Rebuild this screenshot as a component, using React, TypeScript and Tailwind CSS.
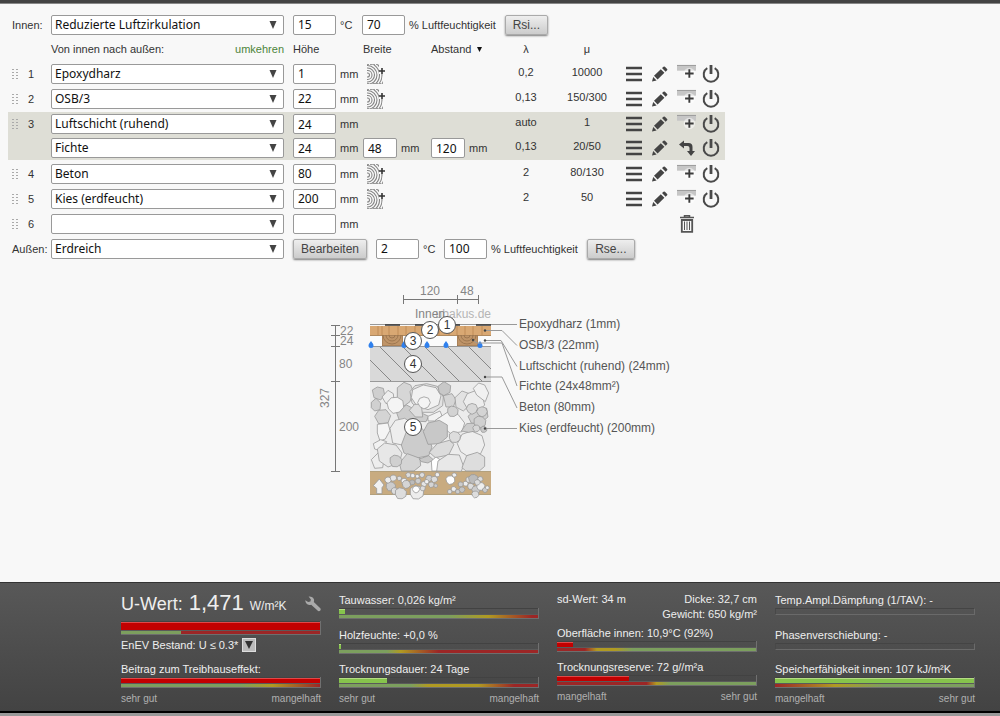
import { useState } from "react";
import type { ReactNode } from "react";

type Layer = {
    id: string;
    nr?: string;
    material: string;
    height: string;
    width?: string;
    spacing?: string;
    lambda?: string;
    mu?: string;
    canSplit?: boolean;
    action?: "add" | "swap" | "trash";
};

const upperLayers: Layer[] = [
    { id: "l1", nr: "1", material: "Epoxydharz", height: "1", lambda: "0,2", mu: "10000", canSplit: true, action: "add" },
    { id: "l2", nr: "2", material: "OSB/3", height: "22", lambda: "0,13", mu: "150/300", canSplit: true, action: "add" },
];

const airLayers: Layer[] = [
    { id: "l3", nr: "3", material: "Luftschicht (ruhend)", height: "24", lambda: "auto", mu: "1", action: "add" },
    { id: "l3b", material: "Fichte", height: "24", width: "48", spacing: "120", lambda: "0,13", mu: "20/50", action: "swap" },
];

const lowerLayers: Layer[] = [
    { id: "l4", nr: "4", material: "Beton", height: "80", lambda: "2", mu: "80/130", canSplit: true, action: "add" },
    { id: "l5", nr: "5", material: "Kies (erdfeucht)", height: "200", lambda: "2", mu: "50", canSplit: true, action: "add" },
    { id: "l6", nr: "6", material: "", height: "", action: "trash" },
];

const fieldFont = "font-['Noto_Sans',sans-serif] text-[12px] text-[#111]";

const Select = ({ label, value }: { label: string; value: string }) => (
    <div className="relative h-5 w-[233px]">
        <select
            aria-label={label}
            defaultValue={value}
            className={`block h-5 w-full appearance-none rounded-[2px] border border-[#999] bg-white pl-[3px] leading-[18px] ${fieldFont}`}
        >
            <option value={value}>{value}</option>
        </select>
        <svg className="pointer-events-none absolute top-[6px] right-[7px] h-2 w-2" viewBox="0 0 8 8" fill="#444">
            <path d="M.5 0h7L4 8z" />
        </svg>
    </div>
);

const Field = ({ label, value, className = "w-[43px]" }: { label: string; value: string; className?: string }) => (
    <input
        aria-label={label}
        defaultValue={value}
        className={`h-5 rounded-[2px] border border-[#999] bg-white px-1 leading-[18px] ${fieldFont} ${className}`}
    />
);

const GreyButton = ({ children, className = "" }: { children: ReactNode; className?: string }) => (
    <button className={`h-5 rounded-[2px] border border-[#aaa] bg-linear-to-b from-[#eee] to-[#ccc] text-[12px] leading-[18px] text-[#444] shadow-[0_1px_2px_rgba(0,0,0,0.5)] ${className}`}>
        {children}
    </button>
);

const GripIcon = () => (
    <svg className="ml-1 h-[10px] w-[7px]" viewBox="0 0 7 10" fill="#aaa">
        {[0, 3, 6, 9].map((y) => (
            <g key={y}>
                <rect x="0" y={y} width="2" height="1" />
                <rect x="4" y={y} width="2" height="1" />
            </g>
        ))}
    </svg>
);

const WoodIcon = () => (
    <svg className="h-5 w-[18px]" viewBox="0 0 18 20" fill="none">
        <defs>
            <clipPath id="wood-clip">
                <path d="M0 0h12v10h4v10H0z" />
            </clipPath>
        </defs>
        <g clipPath="url(#wood-clip)" stroke="#858585" strokeWidth="1.1">
            {[2, 4.5, 7, 9.5, 12, 14.5, 17].map((r) => (
                <circle key={r} cx="0.5" cy="11" r={r} />
            ))}
        </g>
        <path d="M0 .5h12M0 19.5h16" stroke="#999" strokeDasharray="2 1" />
        <path d="M15 4v6M12 7h6" stroke="#333" strokeWidth="1.6" />
    </svg>
);

const MenuIcon = () => (
    <svg className="ml-px h-4 w-4" viewBox="0 0 16 16" stroke="#444" strokeWidth="2.4">
        <path d="M0 2h16M0 8h16M0 14h16" />
    </svg>
);

const PencilIcon = () => (
    <svg className="ml-px h-4 w-4" viewBox="0 0 16 16" fill="#444">
        <path d="M0 15.500l1.200-4.500 3.400 3.400zM2 9.800l6.800-6.600 3.600 3.600-6.800 6.600zM10 2.100l1.500-1.400q.7-.6 1.400 0l2.200 2.200q.7.700 0 1.400L13.600 5.700z" />
    </svg>
);

const AddIcon = () => (
    <svg className="ml-px h-5 w-5" viewBox="0 0 20 20">
        <path d="M0 .5h20v6H0z" fill="#c6c6c6" />
        <path d="M0 1h20" stroke="#999" />
        <circle cx="13" cy="9.500" r="6" fill="#fff" fillOpacity=".5" />
        <path d="M13 5v9M8.500 9.500h9" stroke="#3c3c3c" strokeWidth="2" />
    </svg>
);

const SwapIcon = () => (
    <svg className="ml-px h-4 w-4" viewBox="0 0 16 16" fill="#444">
        <path d="M0 4.500L5 .5V3h4.500q4 0 4 4V11H16l-4 5-4-5h2.500V8q0-2-2-2H5v2.500z" />
    </svg>
);

const PowerIcon = () => (
    <svg className="h-[18px] w-[18px]" viewBox="0 0 18 18" fill="none" stroke="#4a4a4a">
        <path d="M5.300 3.200a7.300 7.300 0 1 0 7.400 0" strokeWidth="2" />
        <path d="M9 0v9" strokeWidth="2.800" />
    </svg>
);

const TrashIcon = () => (
    <svg className="ml-px h-[18px] w-[14px]" viewBox="0 0 14 18" fill="none" stroke="#555">
        <path d="M4.500 2V.8h5V2M0 2.500h14" strokeWidth="1.500" />
        <path d="M1.800 5v11.800h10.400V5z" strokeWidth="1.800" />
        <path d="M4.500 6.500v8.500M7 6.500v8.500M9.500 6.500v8.500" strokeWidth="1" />
    </svg>
);

const actionIcons = {
    add: { label: "Schicht einfügen", icon: <AddIcon /> },
    swap: { label: "Tauschen", icon: <SwapIcon /> },
    trash: { label: "Löschen", icon: <TrashIcon /> },
};

const rowGrid =
    "grid grid-cols-[20px_23px_242px_47px_23px_68px_60px_70px_52px_12px_26px_25px_26px_23px] items-center";

const IconButton = ({ label, children, className = "" }: { label: string; children: ReactNode; className?: string }) => (
    <button aria-label={label} className={`flex h-5 items-center ${className}`}>
        {children}
    </button>
);

const LayerRow = ({ layer, className = "h-[25px]" }: { layer: Layer; className?: string }) => {
    const action = layer.action && actionIcons[layer.action];
    return (
        <div className={`${rowGrid} ${className}`}>
            <div>{layer.nr && <GripIcon />}</div>
            <div>{layer.nr}</div>
            <Select label={`Material ${layer.id}`} value={layer.material} />
            <Field label={`Höhe ${layer.id}`} value={layer.height} />
            <span>mm</span>
            <div className="flex items-center gap-1">
                {layer.canSplit && (
                    <IconButton label="Balken hinzufügen" className="ml-1">
                        <WoodIcon />
                    </IconButton>
                )}
                {layer.width && (
                    <>
                        <Field label={`Breite ${layer.id}`} value={layer.width} className="w-[34px]" />
                        <span>mm</span>
                    </>
                )}
            </div>
            <div className="flex items-center gap-1">
                {layer.spacing && (
                    <>
                        <Field label={`Abstand ${layer.id}`} value={layer.spacing} className="w-[34px]" />
                        <span>mm</span>
                    </>
                )}
            </div>
            <div className="pb-1 text-center">{layer.lambda}</div>
            <div className="pb-1 text-center">{layer.mu}</div>
            <div />
            {layer.lambda ? <IconButton label="Menü"><MenuIcon /></IconButton> : <div />}
            {layer.lambda ? <IconButton label="Bearbeiten"><PencilIcon /></IconButton> : <div />}
            {action ? (
                <IconButton label={action.label} className="w-5 justify-center">{action.icon}</IconButton>
            ) : <div />}
            {layer.lambda ? <IconButton label="Ein/Aus"><PowerIcon /></IconButton> : <div />}
        </div>
    );
};

// gravel stones, drawn at three times the size of the section
const bigStones: [string, string][] = [
    ["37,45 52,36 70,40 74,60 62,75 42,68", "#cfcfcf"],
    ["34,82 48,70 62,84 60,104 44,108 34,98", "#d0d0d0"],
    ["112,38 132,22 152,30 160,50 150,80 128,96 112,70", "#d6d6d6"],
    ["150,50 165,32 200,26 232,34 250,66 248,92 220,112 186,112 156,84", "#e2e2e2"],
    ["158,44 190,30 228,38 243,62 236,90 204,104 170,92 154,68", "#f1f1f1"],
    ["234,34 252,20 272,32 270,52 252,62 238,54", "#c8c8c8"],
    ["250,62 276,56 288,74 280,96 258,96", "#d5d5d5"],
    ["285,68 306,48 328,56 330,90 310,108 288,96", "#e2e2e2"],
    ["310,80 322,56 344,48 366,60 374,90 352,112 326,108", "#ededed"],
    ["340,40 356,24 374,30 386,54 376,80 350,60", "#f1f1f1"],
    ["44,124 56,106 78,104 92,122 84,144 56,146", "#d4d4d4"],
    ["66,66 84,46 100,56 102,78 78,86", "#eeeeee"],
    ["108,108 140,90 176,110 206,124 198,140 118,136", "#cdcdcd"],
    ["148,106 164,88 184,88 188,126 166,126", "#dedede"],
    ["204,124 240,108 246,122 224,138 204,138", "#f2f2f2"],
    ["52,148 84,144 90,166 76,192 60,198 52,174", "#f5f5f5"],
    ["90,160 106,136 134,130 154,142 148,190 126,210 98,204", "#eeeeee"],
    ["226,136 262,112 294,118 314,144 306,170 272,176", "#f4f4f4"],
    ["40,206 62,194 80,200 62,228 44,222", "#f1f1f1"],
    ["34,254 56,232 72,254 68,278 44,280", "#ededed"],
    ["124,210 140,168 176,150 204,180 216,216 206,242 166,250 132,234", "#cccccc"],
    ["190,170 204,144 238,136 262,150 262,186 238,206 204,208", "#c8c8c8"],
    ["208,232 232,206 268,196 282,208 266,240 226,248", "#dcdcdc"],
    ["52,222 74,204 108,210 126,234 118,264 84,276 58,258", "#e7e7e7"],
    ["118,264 142,236 180,250 182,272 162,288 124,288", "#d4d4d4"],
    ["178,252 206,242 220,254 204,264 184,260", "#c8c8c8"],
    ["216,288 214,258 228,246 240,254 232,288", "#ffffff"],
    ["230,288 234,258 264,238 298,240 310,272 304,289", "#e8e8e8"],
    ["292,206 306,178 334,168 366,182 374,210 362,236 320,242 302,230", "#eeeeee"],
    ["306,278 320,242 352,232 374,246 374,274 358,288 318,288", "#dddddd"],
    ["304,168 320,146 344,144 346,168 326,172", "#cdcdcd"],
    ["324,124 344,106 380,100 384,126 360,146 334,144", "#d0d0d0"],
];

const roundStones: [number, number, number, string][] = [
    [106, 90, 26, "#f4f4f4"],
    [192, 83, 19, "#f4f4f4"],
    [278, 109, 17, "#d3d3d3"],
    [284, 186, 18, "#dddddd"],
    [107, 258, 19, "#d0d0d0"],
    [336, 101, 17, "#d9d9d9"],
    [366, 110, 16, "#d4d4d4"],
    [359, 141, 19, "#d0d0d0"],
    [349, 160, 11, "#d7d7d7"],
    [371, 163, 10, "#c8c8c8"],
];

const soilStones: [number, number, number, string][] = [
    [92, 334, 15, "#ccc"], [84, 315, 10, "#eee"], [100, 309, 10, "#e5e5e5"], [118, 310, 7, "#ddd"],
    [104, 348, 11, "#ddd"], [132, 318, 9, "#f1f1f1"], [145, 300, 8, "#ddd"], [158, 302, 7, "#eee"],
    [139, 328, 13, "#d5d5d5"], [122, 355, 18, "#ddd"], [157, 322, 8, "#bbb"], [170, 352, 22, "#ededed"],
    [168, 343, 11, "#fff"], [174, 318, 9, "#ccc"], [186, 300, 8, "#ddd"], [192, 327, 9, "#e5e5e5"],
    [207, 310, 10, "#ccc"], [214, 329, 9, "#d5d5d5"], [223, 313, 10, "#ddd"], [232, 299, 7, "#eee"],
    [172, 304, 6, "#eee"], [200, 320, 7, "#f1f1f1"], [188, 340, 8, "#ddd"], [227, 332, 6, "#ccc"],
    [271, 315, 14, "#fff"], [283, 300, 7, "#eee"], [269, 350, 7, "#ddd"], [281, 342, 8, "#eee"],
    [293, 350, 7, "#ccc"], [302, 328, 8, "#ccc"], [306, 344, 9, "#c4c4c4"], [317, 326, 8, "#eee"],
    [326, 314, 9, "#ddd"], [340, 312, 15, "#bbb"], [332, 334, 10, "#ddd"], [348, 344, 13, "#ccc"],
    [346, 358, 11, "#ddd"], [362, 334, 13, "#eee"], [361, 312, 8, "#ddd"], [375, 345, 8, "#ccc"],
    [352, 322, 9, "#ddd"], [382, 338, 6, "#eee"],
];

// slightly irregular octagon
const stonePoints = (cx: number, cy: number, r: number) =>
    [1, 0.94, 1, 0.9, 1, 0.96, 0.92, 1]
        .map((f, i) => {
            const a = (i + (cx % 3) / 3) * (Math.PI / 4);
            return `${(cx + r * f * Math.cos(a)).toFixed(1)},${(cy + r * f * Math.sin(a)).toFixed(1)}`;
        })
        .join(" ");

const markers: [string, number, number][] = [
    ["1", 447, 325],
    ["2", 430, 330],
    ["3", 413, 341],
    ["4", 413, 364],
    ["5", 413, 427],
];

const legend: [string, number][] = [
    ["Epoxydharz (1mm)", 328],
    ["OSB/3 (22mm)", 349],
    ["Luftschicht (ruhend) (24mm)", 370],
    ["Fichte (24x48mm²)", 390],
    ["Beton (80mm)", 411],
    ["Kies (erdfeucht) (200mm)", 432],
];

const CrossSection = () => (
    <svg className="mx-auto mt-6 h-[216px] w-[364px] text-[12px]" viewBox="318 285 364 216" fontFamily="Liberation Sans, Arial, sans-serif">
        <defs>
            <clipPath id="concrete"><path d="M370 346h121v35H370z" /></clipPath>
            <clipPath id="beam1"><path d="M382 335h21v11h-21z" /></clipPath>
            <clipPath id="beam2"><path d="M457 335h21v11h-21z" /></clipPath>
        </defs>

        {/* dimensions */}
        <g stroke="#777" fill="none">
            <path d="M403 299.500H479M403.500 295v9M457.500 295v9M478.500 295v9" />
            <path d="M335.500 325v146M331 325.500h9M331 335.500h9M331 346.500h9M331 381.500h9M331 471.500h9" />
        </g>
        <g fill="#858585">
            <text x="430" y="295" textAnchor="middle">120</text>
            <text x="467" y="295" textAnchor="middle">48</text>
            <text x="340" y="335">22</text>
            <text x="340" y="345">24</text>
            <text x="339" y="368">80</text>
            <text x="339" y="431">200</text>
            <text transform="translate(329 398) rotate(-90)" textAnchor="middle">327</text>
            <text x="491" y="318" textAnchor="end" fill="#b5b5b5">ubakus.de</text>
            <text x="415" y="318">Innen</text>
        </g>

        {/* osb and air with beams */}
        <path d="M370 335h121v11H370z" fill="#fbfbfb" />
        <path d="M370 326h121v9H370z" fill="#d9a873" />
        <path d="M378 326v9M382 326v9M389 326v9M398 326v9M406 326v9M415 326v9M423 326v9M439 326v9M449 326v9M457 326v9M465 326v9M473 326v9M482 326v9" stroke="#c08c58" />
        <path d="M370 335.500h121" stroke="#b08a60" />
        {[392, 467].map((x, i) => (
            <g key={x} clipPath={i ? "url(#beam2)" : "url(#beam1)"} fill="none" stroke="#96704a">
                <path d={`M${x - 10} 335h21v11h-21z`} fill="#bf9468" />
                {[3, 6, 9].map((r) => (
                    <circle key={r} cx={x} cy="335" r={r} strokeWidth=".8" />
                ))}
            </g>
        ))}
        <path d="M370 324.500h121" stroke="#999" />
        <path d="M385 325h15M415 325h15M445 325h15M476 325h15" stroke="#333" strokeWidth="1.500" />

        {/* concrete */}
        <path d="M370 346h121v35H370z" fill="#d9d9d9" />
        <g clipPath="url(#concrete)" stroke="#888">
            <path d="M356 346l36 36M379 346l36 36M402 346l36 36M424 346l36 36M447 346l36 36M468 346l36 36" />
        </g>
        <path d="M370 346.500h121M370 381.500h121" stroke="#999" />
        <g fill="#2f80ed">
            {[371, 404, 427, 446, 480].map((x) => (
                <path key={x} d={`M${x} 341q2.500 3 2.500 4.500a2.500 2.500 0 0 1-5 0q0-1.500 2.500-4.500z`} />
            ))}
        </g>

        {/* gravel and soil */}
        <path d="M370 382h121v89H370z" fill="#ececec" />
        <path d="M370 471h121v23H370z" fill="#c8ab80" />
        <path d="M370 471.500h121M370 494.500h121" stroke="#b3a07c" />
        <g transform="translate(360 375) scale(.3333)" stroke="#999" strokeWidth="2.400" strokeLinejoin="round">
            {bigStones.map(([points, fill]) => (
                <polygon key={points} points={points} fill={fill} />
            ))}
            <path d="M40 332l18-20 14 18-6 8v18H50v-16z" fill="#f1f1f1" />
            {[...roundStones, ...soilStones].map(([cx, cy, r, fill]) => (
                <polygon key={`${cx}-${cy}`} points={stonePoints(cx, cy, r)} fill={fill} />
            ))}
        </g>

        {/* leader lines */}
        <g fill="none" stroke="#999">
            <path d="M491 324.500h26M485 330.500h17l15 15M485 340.500h16l16 26M473 340l4 3h25l15 43M485 377h17l15 31M485 428.500h32" />
        </g>
        <g fill="#444">
            {[[485, 330.5], [485, 340.5], [473, 340], [485, 377], [485, 428.5]].map(([x, y]) => (
                <circle key={`${x}-${y}`} cx={x} cy={y} r="1.200" />
            ))}
        </g>
        <g fill="#555">
            {legend.map(([text, y]) => (
                <text key={text} x="519" y={y}>{text}</text>
            ))}
        </g>

        {[...markers].reverse().map(([nr, x, y]) => (
            <g key={nr}>
                <circle cx={x} cy={y} r="8.500" fill="#fff" stroke="#555" />
                <text x={x} y={y + 4} textAnchor="middle" fill="#333">{nr}</text>
            </g>
        ))}
    </svg>
);

const fillColors = {
    red: "border-t border-[#e04848] bg-[#c20000]",
    green: "border-t border-[#b4dc84] bg-[#86c44c]",
};

type MeterProps = { fill: number; color: "red" | "green"; scale: string; tall?: boolean };

const Meter = ({ fill, color, scale, tall }: MeterProps) => (
    <div className="border-r border-[#707070]">
        <div className={`border-t border-[#424242] ${tall ? "h-[9px]" : "h-[6px]"}`}>
            <div className={`h-full ${fillColors[color]}`} style={{ width: `${fill}%` }} />
        </div>
        <div className="h-px bg-[#5a5a5a]" />
        <div className={`h-[4px] border-b border-[#6e6e6e] ${scale}`} />
    </div>
);

const EmptyMeter = () => (
    <div className="h-[11px]">
        <div className="h-[7px] border border-t-[#444] border-r-[#6a6a6a] border-b-[#6a6a6a] border-l-[#484848]" />
    </div>
);

const Value = ({ text, children }: { text: string; children: ReactNode }) => (
    <div>
        <div className="h-4 leading-4">{text}</div>
        {children}
    </div>
);

const ScaleLabels = ({ left, right }: { left: string; right: string }) => (
    <div className="mt-1 flex justify-between text-[10px] leading-[14px] text-[#b0b0b0]">
        <span>{left}</span>
        <span>{right}</span>
    </div>
);

const Results = () => (
    <footer>
        <div className="flex flex-wrap justify-center gap-x-[18px] border-t border-[#333] bg-linear-to-b from-[#585858] to-[#434343] pt-[9px] pb-[5px] pl-24 text-[11px] text-[#eee]">
            <section className="w-[200px]">
                <div className="flex h-[29px] items-start justify-between">
                    <div className="flex items-baseline gap-[6px] text-[18px] leading-[22px] whitespace-nowrap">
                        <span>U-Wert:</span>
                        <span className="text-[22px]">1,471</span>
                        <span className="text-[12px]">W/m²K</span>
                    </div>
                    <button aria-label="Einstellungen" className="mt-1">
                        <svg className="h-4 w-4" viewBox="0 0 16 16" fill="#aaa">
                            <path d="M3.600.4Q8 .2 9 3.600q.2 1.200-.2 2.300l6.500 6.400q.8 1.200 0 2.200t-2.200.6L6.200 8.700Q3 9.800 1.200 7.200.2 5.600.4 4.200l2.700 1.900 2.300-.6.500-2z" />
                        </svg>
                    </button>
                </div>
                <Meter tall fill={100} color="red" scale="bg-[linear-gradient(90deg,#7c9f5e_30%,#9c2626_30%)]" />
                <div className="mt-[2px] flex h-4 items-center gap-1 leading-4">
                    <span>EnEV Bestand: U ≤ 0.3*</span>
                    <button aria-label="Auswahl" className="flex h-[14px] w-[14px] items-center justify-center border border-[#ddd] bg-[#bbb]">
                        <svg className="h-2 w-2" viewBox="0 0 8 8" fill="#333">
                            <path d="M0 0h8L4 8z" />
                        </svg>
                    </button>
                </div>
                <div className="mt-2">
                    <Value text="Beitrag zum Treibhauseffekt:">
                        <Meter fill={100} color="red" scale="bg-[linear-gradient(90deg,#7c9f5e_60%,#b09a22_76%,#9c2626_100%)]" />
                    </Value>
                </div>
                <ScaleLabels left="sehr gut" right="mangelhaft" />
            </section>

            <section className="w-[200px]">
                <div className="flex h-24 flex-col justify-between">
                    <Value text="Tauwasser: 0,026 kg/m²">
                        <Meter fill={3} color="green" scale="bg-[linear-gradient(90deg,#7c9f5e_55%,#b09a22_75%,#9c2626_97%)]" />
                    </Value>
                    <Value text="Holzfeuchte: +0,0 %">
                        <Meter fill={1} color="green" scale="bg-[linear-gradient(90deg,#7c9f5e_24%,#b09a22_31%,#9c2626_50%)]" />
                    </Value>
                    <Value text="Trocknungsdauer: 24 Tage">
                        <Meter fill={24} color="green" scale="bg-[linear-gradient(90deg,#7c9f5e_36%,#b09a22_45%,#b09a22_70%,#9c2626_88%)]" />
                    </Value>
                </div>
                <ScaleLabels left="sehr gut" right="mangelhaft" />
            </section>

            <section className="w-[200px]">
                <div className="flex justify-between leading-[15px]">
                    <span>sd-Wert: 34 m</span>
                    <div className="text-right">
                        <div>Dicke: 32,7 cm</div>
                        <div>Gewicht: 650 kg/m²</div>
                    </div>
                </div>
                <div className="mt-[3px] flex flex-col gap-[7px]">
                    <Value text="Oberfläche innen: 10,9°C (92%)">
                        <Meter fill={8} color="red" scale="bg-[linear-gradient(90deg,#9c2626_14%,#b09a22_20%,#b09a22_29%,#7c9f5e_38%)]" />
                    </Value>
                    <Value text="Trocknungsreserve: 72 g//m²a">
                        <Meter fill={36} color="red" scale="bg-[linear-gradient(90deg,#9c2626_45%,#b09a22_50%,#7c9f5e_57%)]" />
                    </Value>
                </div>
                <ScaleLabels left="mangelhaft" right="sehr gut" />
            </section>

            <section className="w-[200px]">
                <div className="flex h-24 flex-col justify-between">
                    <Value text="Temp.Ampl.Dämpfung (1/TAV): -">
                        <EmptyMeter />
                    </Value>
                    <Value text="Phasenverschiebung: -">
                        <EmptyMeter />
                    </Value>
                    <Value text="Speicherfähigkeit innen: 107 kJ/m²K">
                        <Meter fill={100} color="green" scale="bg-[linear-gradient(90deg,#9c2626_0%,#b09a22_30%,#7c9f5e_55%)]" />
                    </Value>
                </div>
                <ScaleLabels left="mangelhaft" right="sehr gut" />
            </section>
        </div>
        <div className="h-[2px] bg-black" />
        <div className="h-[3px] bg-[#999]" />
    </footer>
);

const App = () => {
    const [reversed, setReversed] = useState(false);

    return (
        <div className="flex min-h-screen flex-col bg-[#f8f8f8] font-['Liberation_Sans',Arial,sans-serif]">
            <div className="h-1 border-b border-[#888] bg-[#444]" />
            <main className="flex-1 pt-2 text-[11px] leading-4 text-[#333]">
                <div className="ml-2 w-fit">
                    <div className="flex h-[25px] items-center gap-1">
                        <span className="w-[39px] pl-1">Innen:</span>
                        <Select label="Innen" value="Reduzierte Luftzirkulation" />
                        <Field label="Temperatur innen" value="15" className="ml-[5px] w-[43px]" />
                        <span className="w-[18px]">°C</span>
                        <Field label="Luftfeuchtigkeit innen" value="70" />
                        <span>% Luftfeuchtigkeit</span>
                        <GreyButton className="ml-[5px] w-[43px]">Rsi...</GreyButton>
                    </div>

                    <div className={`${rowGrid} h-6`}>
                        <div />
                        <div />
                        <div className="flex justify-between pr-[9px]">
                            <span>{reversed ? "Von außen nach innen:" : "Von innen nach außen:"}</span>
                            <button className="text-[#4c8438]" onClick={() => setReversed(!reversed)}>umkehren</button>
                        </div>
                        <div>Höhe</div>
                        <div />
                        <div>Breite</div>
                        <button className="flex items-center gap-[6px]">
                            Abstand
                            <svg className="h-[5px] w-[5px]" viewBox="0 0 4 4" fill="#111"><path d="M0 0h4L2 4z" /></svg>
                        </button>
                        <div className="text-center">λ</div>
                        <div className="text-center">μ</div>
                    </div>

                    {upperLayers.map((layer) => <LayerRow key={layer.id} layer={layer} />)}
                    <div className="border-y border-[#f8f8f8] bg-[#deded6]">
                        {airLayers.map((layer) => <LayerRow key={layer.id} layer={layer} className="h-6" />)}
                    </div>
                    {lowerLayers.map((layer) => <LayerRow key={layer.id} layer={layer} />)}

                    <div className="flex h-[25px] items-center gap-1">
                        <span className="w-[39px] pl-1">Außen:</span>
                        <Select label="Außen" value="Erdreich" />
                        <GreyButton className="ml-[5px] w-[74px]">Bearbeiten</GreyButton>
                        <Field label="Temperatur außen" value="2" className="ml-[5px] w-[43px]" />
                        <span className="w-[17px]">°C</span>
                        <Field label="Luftfeuchtigkeit außen" value="100" />
                        <span>% Luftfeuchtigkeit</span>
                        <GreyButton className="ml-[5px] w-[48px]">Rse...</GreyButton>
                    </div>
                </div>

                <CrossSection />
            </main>
            <Results />
        </div>
    );
};

export default App;
